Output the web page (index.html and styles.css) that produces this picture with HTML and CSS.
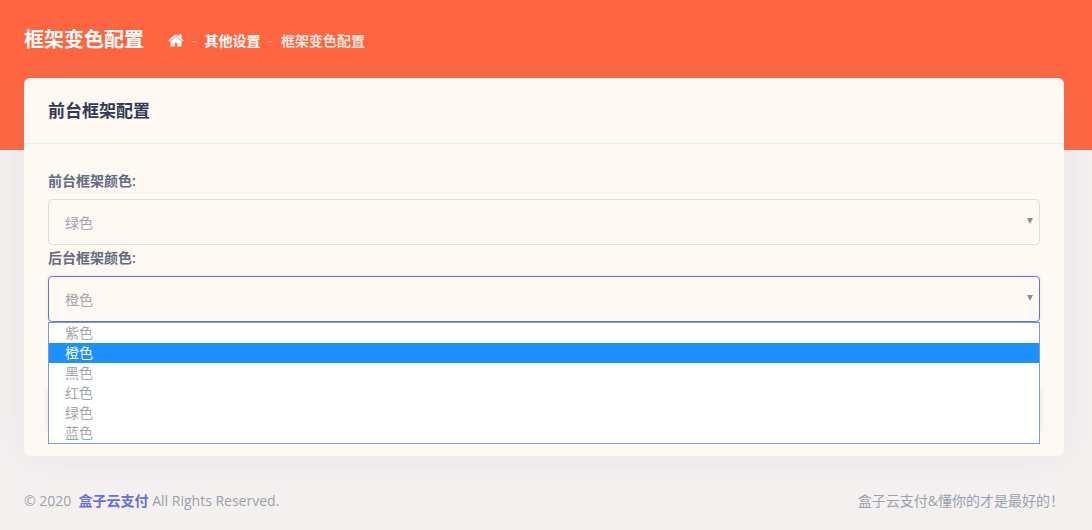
FILE: index.html
```html
<!DOCTYPE html>
<html lang="zh-CN">
<head>
<meta charset="utf-8">
<title>框架变色配置</title>
<link rel="stylesheet" href="styles.css">
</head>
<body>
<header class="hero">
  <h1 class="hero-title">框架变色配置</h1>
  <nav class="crumbs">
    <svg class="home" viewBox="0 0 1664 1312" aria-hidden="true"><path d="M1408 736v480q0 26-19 45t-45 19h-384V896H704v384H320q-26 0-45-19t-19-45V736q0-1 .5-3t.5-3l575-474 575 474q1 2 1 6zm223-69l-62 74q-8 9-21 11h-3q-13 0-21-7L832 193 140 745q-12 8-24 7-13-2-21-11l-62-74q-8-10-7-23.500t11-21.500L756 26q32-26 76-26t76 26l235 196V32q0-14 9-23t23-9h192q14 0 23 9t9 23v408l219 182q10 8 11 21.500t-7 23.500z"/></svg>
    <span class="sep">-</span>
    <span class="crumb">其他设置</span>
    <span class="sep">-</span>
    <span class="crumb current">框架变色配置</span>
  </nav>
</header>
<main class="card">
  <h2 class="card-title">前台框架配置</h2>
  <form class="card-body">
    <label class="field-label">前台框架颜色:</label>
    <div class="select">绿色<span class="caret"></span></div>
    <label class="field-label">后台框架颜色:</label>
    <div class="select-wrap">
      <div class="select open">橙色<span class="caret"></span></div>
      <ul class="listbox">
        <li>紫色</li>
        <li class="active">橙色</li>
        <li>黑色</li>
        <li>红色</li>
        <li>绿色</li>
        <li>蓝色</li>
      </ul>
    </div>
    <div class="covered-button"></div>
  </form>
</main>
<footer class="foot">
  <div>© 2020 &nbsp;<a class="brand" href="#">盒子云支付</a> All Rights Reserved.</div>
  <div>盒子云支付&amp;懂你的才是最好的！</div>
</footer>
</body>
</html>
```
FILE: styles.css
```css
* { box-sizing: border-box; }
html, body { margin: 0; padding: 0; }
body {
  width: 1092px;
  height: 530px;
  overflow: hidden;
  background: #f5f0f0;
  color: #98a1ad;
  font-family: "Open Sans", "Noto Sans CJK SC", sans-serif;
  font-size: 14px;
}
.hero {
  height: 150px;
  margin-bottom: -72px;
  padding: 1px 24px 71px;
  background: #ff6540;
  display: flex;
  align-items: center;
  color: #fff;
}
.hero-title {
  margin: 0 24px 0 0;
  font-size: 20px;
  font-weight: 700;
  line-height: 24px;
}
.crumbs {
  display: flex;
  align-items: center;
  gap: 8px;
  font-size: 14px;
  font-weight: 600;
}
.home { width: 16px; height: 13px; fill: #fff; }
.sep { color: #b4b4ae; font-weight: 400; }
.crumb { color: #fff; }
.current { color: #eee4de; }
.card {
  margin: 0 28px 0 24px;
  height: 378px;
  background: #fef9f3;
  border-radius: 6px;
  box-shadow: 0 0 35px rgba(154, 161, 171, 0.15);
}
.card-title {
  margin: 0;
  height: 66px;
  padding: 0 24px 2px;
  display: flex;
  align-items: center;
  font-size: 17px;
  font-weight: 700;
  color: #343a55;
  border-bottom: 1px solid #f1ece8;
}
.card-body { padding: 28px 24px 12px; }
.field-label {
  display: block;
  height: 18px;
  line-height: 18px;
  font-size: 14px;
  font-weight: 600;
  color: #646b80;
}
.select {
  position: relative;
  height: 46px;
  margin: 9px 0 4px;
  padding: 0 16px;
  display: flex;
  align-items: center;
  font-size: 14px;
  color: #a0a6ad;
  background: #fef9f3;
  border: 1px solid #e2dedb;
  border-radius: 4px;
}
.select.open {
  margin: 0;
  border-color: #6672dc;
  box-shadow: 0 0 4px rgba(102, 114, 220, 0.15);
}
.select-wrap { position: relative; margin-top: 9px; }
.caret {
  position: absolute;
  right: 6px;
  top: 18px;
  border-left: 3px solid transparent;
  border-right: 3px solid transparent;
  border-top: 6px solid #8c8f98;
}
.listbox {
  position: absolute;
  z-index: 1;
  left: 0;
  right: 0;
  top: 46px;
  margin: 0;
  padding: 0;
  list-style: none;
  background: #fff;
  border: 1px solid #7a9ad6;
}
.listbox li {
  height: 20px;
  line-height: 20px;
  padding: 0 16px;
  color: #a0a6ad;
}
.listbox li.active { background: #1e90ff; color: #fff; }
.covered-button {
  height: 42px;
  margin-top: 68px;
  box-shadow: 0 0 6px rgba(120, 120, 120, 0.18);
}
.foot {
  padding: 35px 28px 0 24px;
  display: flex;
  justify-content: space-between;
  font-size: 14px;
  line-height: 19px;
}
.brand { color: #6672dc; font-weight: 700; text-decoration: none; }
```
